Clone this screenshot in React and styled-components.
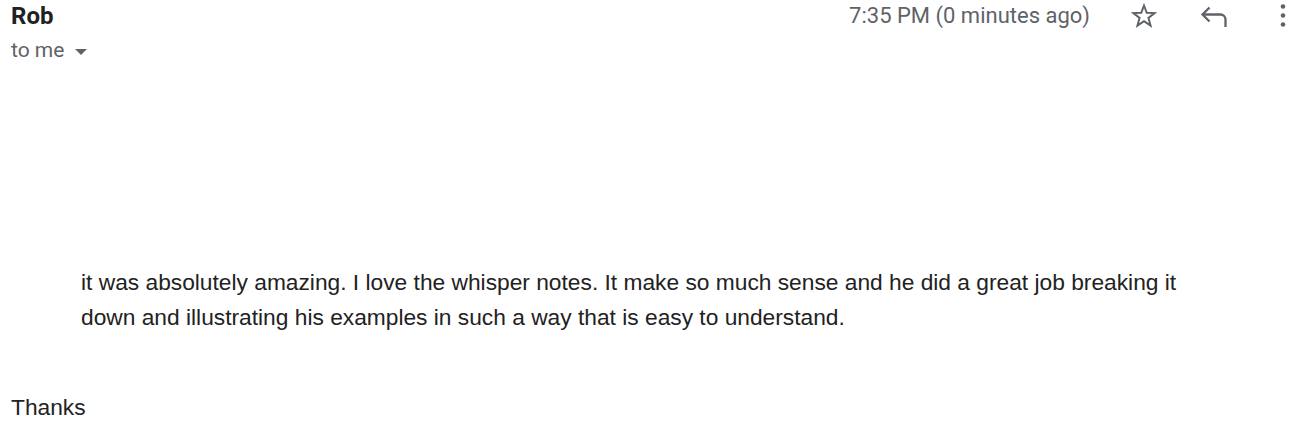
import styled, { createGlobalStyle } from "styled-components";

const Global = createGlobalStyle`
  html, body { margin: 0; padding: 0; background: #fff; }
  body { font-family: Roboto, "Liberation Sans", Arial, sans-serif; }
`;

const Mail = styled.div`
  width: 1298px;
  height: 425px;
  box-sizing: border-box;
  padding: 0 1px 0 11px;
  display: flex;
  flex-direction: column;
  overflow: hidden;
`;

const Header = styled.div`
  display: flex;
  justify-content: space-between;
  align-items: flex-start;
`;

const Sender = styled.div`
  display: flex;
  flex-direction: column;
`;

const Name = styled.div`
  font-family: Roboto, "Liberation Sans", sans-serif;
  font-weight: 700;
  font-size: 24px;
  line-height: 32px;
  color: #202124;
`;

const Recipient = styled.div`
  display: flex;
  align-items: center;
  gap: 11px;
  font-size: 21px;
  line-height: 28px;
  color: #5f6368;
  margin-top: 4px;
`;

const Caret = styled.span`
  width: 0;
  height: 0;
  border-left: 6.5px solid transparent;
  border-right: 6.5px solid transparent;
  border-top: 6px solid #5f6368;
  margin-top: 4px;
`;

const Actions = styled.div`
  display: flex;
  align-items: flex-start;
`;

const Time = styled.span`
  font-size: 22px;
  line-height: 32px;
  color: #5f6368;
`;

const IconButton = styled.span`
  display: flex;
  align-items: center;
  justify-content: center;
  width: ${(p) => p.w}px;
  height: 32px;
  margin-left: ${(p) => p.gap}px;
  color: #5f6368;
`;

const Body = styled.div`
  font-family: "Liberation Sans", Arial, sans-serif;
  font-size: 22.75px;
  line-height: 35px;
  color: #222;
`;

const Quote = styled.p`
  margin: 201px 0 0 70px;
  width: 1130px;
`;

const SignOff = styled.p`
  margin: 55px 0 0 0;
`;

const Star = () => (
  <svg width="26" height="26" viewBox="0 0 24 24" fill="none" stroke="currentColor" strokeWidth="1.8" strokeLinejoin="miter">
    <polygon points="12,2.3 14.53,9.02 21.8,9.3 16.09,13.83 18.1,20.9 12,16.8 5.9,20.9 7.91,13.83 2.2,9.3 9.47,9.02" />
  </svg>
);

const Reply = () => (
  <svg width="28" height="32" viewBox="0 0 28 32" fill="none" stroke="currentColor" strokeWidth="2.3" strokeLinejoin="miter">
    <path d="M9.5 7.5 L2.5 14.5 L9.5 21.5" />
    <path d="M2.5 14.5 H20.5 A5 5 0 0 1 25.5 19.5 V27" />
  </svg>
);

const More = () => (
  <svg width="28" height="32" viewBox="0 0 28 32" fill="currentColor">
    <circle cx="14" cy="6.5" r="2.3" />
    <circle cx="14" cy="15.5" r="2.3" />
    <circle cx="14" cy="24.5" r="2.3" />
  </svg>
);

export default function App() {
  return (
    <>
      <Global />
      <Mail>
        <Header>
          <Sender>
            <Name>Rob</Name>
            <Recipient>
              to me <Caret />
            </Recipient>
          </Sender>
          <Actions>
            <Time>7:35 PM (0 minutes ago)</Time>
            <IconButton w={32} gap={38}>
              <Star />
            </IconButton>
            <IconButton w={32} gap={38}>
              <Reply />
            </IconButton>
            <IconButton w={28} gap={39}>
              <More />
            </IconButton>
          </Actions>
        </Header>
        <Body>
          <Quote>
            it was absolutely amazing. I love the whisper notes. It make so much sense and he did a great job breaking it
            down and illustrating his examples in such a way that is easy to understand.
          </Quote>
          <SignOff>Thanks</SignOff>
        </Body>
      </Mail>
    </>
  );
}
